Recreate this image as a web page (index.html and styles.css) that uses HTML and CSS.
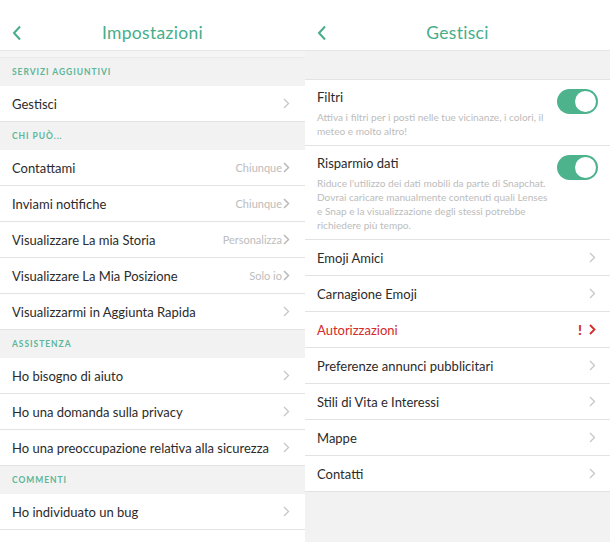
FILE: index.html
```html
<!DOCTYPE html>
<html lang="it">
<head>
  <meta charset="UTF-8">
  <title>Impostazioni</title>
  <link rel="stylesheet" href="styles.css">
</head>
<body>
  <div class="screens">
    <div class="screen">
      <div class="topbar">
        <svg class="back" width="12" height="16" viewBox="0 0 12 16"><polyline points="9,1.5 3,8 9,14.5" fill="none" stroke="#47ad8b" stroke-width="2"/></svg>
        <h1>Impostazioni</h1>
        <span></span>
      </div>
      <div class="cutoff"></div>
      <div class="section-title">Servizi aggiuntivi</div>
      <div class="list">
        <div class="row"><span class="label">Gestisci</span><svg class="chev" width="7" height="11" viewBox="0 0 7 11"><polyline points="1,1 5.5,5.5 1,10" fill="none" stroke="#c6c6c6" stroke-width="1.3"/></svg></div>
      </div>
      <div class="section-title">Chi può...</div>
      <div class="list">
        <div class="row"><span class="label">Contattami</span><span class="value">Chiunque</span><svg class="chev" width="7" height="11" viewBox="0 0 7 11"><polyline points="1,1 5.5,5.5 1,10" fill="none" stroke="#b9b9b9" stroke-width="1.5"/></svg></div>
        <div class="row"><span class="label">Inviami notifiche</span><span class="value">Chiunque</span><svg class="chev" width="7" height="11" viewBox="0 0 7 11"><polyline points="1,1 5.5,5.5 1,10" fill="none" stroke="#b9b9b9" stroke-width="1.5"/></svg></div>
        <div class="row"><span class="label">Visualizzare La mia Storia</span><span class="value">Personalizza</span><svg class="chev" width="7" height="11" viewBox="0 0 7 11"><polyline points="1,1 5.5,5.5 1,10" fill="none" stroke="#b9b9b9" stroke-width="1.5"/></svg></div>
        <div class="row"><span class="label">Visualizzare La Mia Posizione</span><span class="value">Solo io</span><svg class="chev" width="7" height="11" viewBox="0 0 7 11"><polyline points="1,1 5.5,5.5 1,10" fill="none" stroke="#b9b9b9" stroke-width="1.5"/></svg></div>
        <div class="row"><span class="label">Visualizzarmi in Aggiunta Rapida</span><svg class="chev" width="7" height="11" viewBox="0 0 7 11"><polyline points="1,1 5.5,5.5 1,10" fill="none" stroke="#c6c6c6" stroke-width="1.3"/></svg></div>
      </div>
      <div class="section-title">Assistenza</div>
      <div class="list">
        <div class="row"><span class="label">Ho bisogno di aiuto</span><svg class="chev" width="7" height="11" viewBox="0 0 7 11"><polyline points="1,1 5.5,5.5 1,10" fill="none" stroke="#c6c6c6" stroke-width="1.3"/></svg></div>
        <div class="row"><span class="label">Ho una domanda sulla privacy</span><svg class="chev" width="7" height="11" viewBox="0 0 7 11"><polyline points="1,1 5.5,5.5 1,10" fill="none" stroke="#c6c6c6" stroke-width="1.3"/></svg></div>
        <div class="row"><span class="label">Ho una preoccupazione relativa alla sicurezza</span><svg class="chev" width="7" height="11" viewBox="0 0 7 11"><polyline points="1,1 5.5,5.5 1,10" fill="none" stroke="#c6c6c6" stroke-width="1.3"/></svg></div>
      </div>
      <div class="section-title">Commenti</div>
      <div class="list">
        <div class="row"><span class="label">Ho individuato un bug</span><svg class="chev" width="7" height="11" viewBox="0 0 7 11"><polyline points="1,1 5.5,5.5 1,10" fill="none" stroke="#c6c6c6" stroke-width="1.3"/></svg></div>
        <div class="row"></div>
      </div>
    </div>

    <div class="screen">
      <div class="topbar">
        <svg class="back" width="12" height="16" viewBox="0 0 12 16"><polyline points="9,1.5 3,8 9,14.5" fill="none" stroke="#47ad8b" stroke-width="2"/></svg>
        <h1>Gestisci</h1>
        <span></span>
      </div>
      <div class="gap"></div>
      <div class="list boxed">
        <div class="row toggle-row">
          <div class="text">
            <div class="label">Filtri</div>
            <p class="desc">Attiva i filtri per i posti nelle tue vicinanze, i colori, il meteo e molto altro!</p>
          </div>
          <span class="switch"></span>
        </div>
        <div class="row toggle-row">
          <div class="text">
            <div class="label">Risparmio dati</div>
            <p class="desc">Riduce l'utilizzo dei dati mobili da parte di Snapchat. Dovrai caricare manualmente contenuti quali Lenses e Snap e la visualizzazione degli stessi potrebbe richiedere più tempo.</p>
          </div>
          <span class="switch"></span>
        </div>
        <div class="row"><span class="label">Emoji Amici</span><svg class="chev" width="7" height="11" viewBox="0 0 7 11"><polyline points="1,1 5.5,5.5 1,10" fill="none" stroke="#c6c6c6" stroke-width="1.3"/></svg></div>
        <div class="row"><span class="label">Carnagione Emoji</span><svg class="chev" width="7" height="11" viewBox="0 0 7 11"><polyline points="1,1 5.5,5.5 1,10" fill="none" stroke="#c6c6c6" stroke-width="1.3"/></svg></div>
        <div class="row alert"><span class="label">Autorizzazioni</span><span class="bang">!</span><svg class="chev" width="7" height="11" viewBox="0 0 7 11"><polyline points="1,1 5.5,5.5 1,10" fill="none" stroke="#d42a2a" stroke-width="1.8"/></svg></div>
        <div class="row"><span class="label">Preferenze annunci pubblicitari</span><svg class="chev" width="7" height="11" viewBox="0 0 7 11"><polyline points="1,1 5.5,5.5 1,10" fill="none" stroke="#c6c6c6" stroke-width="1.3"/></svg></div>
        <div class="row"><span class="label">Stili di Vita e Interessi</span><svg class="chev" width="7" height="11" viewBox="0 0 7 11"><polyline points="1,1 5.5,5.5 1,10" fill="none" stroke="#c6c6c6" stroke-width="1.3"/></svg></div>
        <div class="row"><span class="label">Mappe</span><svg class="chev" width="7" height="11" viewBox="0 0 7 11"><polyline points="1,1 5.5,5.5 1,10" fill="none" stroke="#c6c6c6" stroke-width="1.3"/></svg></div>
        <div class="row"><span class="label">Contatti</span><svg class="chev" width="7" height="11" viewBox="0 0 7 11"><polyline points="1,1 5.5,5.5 1,10" fill="none" stroke="#c6c6c6" stroke-width="1.3"/></svg></div>
      </div>
    </div>
  </div>
</body>
</html>
```

FILE: styles.css
```css
body { margin: 0; font-family: Lato, "Noto Sans", sans-serif; color: #2b2b2b; background: #fff; }
.screens { display: flex; width: 610px; height: 542px; overflow: hidden; }
.screen { width: 305px; height: 542px; overflow: hidden; background: #f2f2f2; display: flex; flex-direction: column; }
.topbar { height: 50px; flex-shrink: 0; background: #fff; border-bottom: 1px solid #e6e6e6; display: grid; grid-template-columns: 40px 1fr 40px; align-items: center; }
.topbar h1 { margin: 15px 0 0; text-align: center; font-size: 17.5px; font-weight: 400; color: #47ad8b; letter-spacing: 0.3px; }
.back { margin: 16px 0 0 11px; }
.cutoff { height: 6px; flex-shrink: 0; background: #f5f5f5; border-bottom: 1px solid #e9e9e9; }
.gap { height: 28px; flex-shrink: 0; }
.section-title { height: 28px; flex-shrink: 0; display: flex; align-items: center; padding: 0 12px; font-size: 8.5px; font-weight: 700; letter-spacing: 0.95px; text-transform: uppercase; color: #5cb699; }
.list { background: #fff; }
.list.boxed { border-top: 1px solid #e3e3e3; }
.row { height: 35px; display: flex; align-items: center; padding: 0 15px 0 12px; border-bottom: 1px solid #e3e3e3; font-size: 13px; }
.row .label { flex: 1; }
.screen + .screen .row { padding-left: 12px; padding-right: 14px; }
.value { font-size: 11px; color: #bdbdbd; margin-right: 1px; }
.chev { flex-shrink: 0; }
.screen + .screen .toggle-row { height: auto; align-items: flex-start; padding-top: 9px; padding-bottom: 7px; padding-right: 12px; }
.toggle-row .text { flex: 1; }
.desc { margin: 5px 0 0; font-size: 10.1px; line-height: 14px; color: #bcbcbc; padding-right: 6px; }
.switch { width: 41px; height: 25px; border-radius: 13px; background: #4db38d; position: relative; flex-shrink: 0; }
.switch::after { content: ""; position: absolute; right: 2px; top: 2px; width: 21px; height: 21px; border-radius: 50%; background: #fff; }
.alert .label { color: #d42a2a; }
.bang { color: #d42a2a; font-weight: 900; font-size: 14px; margin-right: 7px; }
```
